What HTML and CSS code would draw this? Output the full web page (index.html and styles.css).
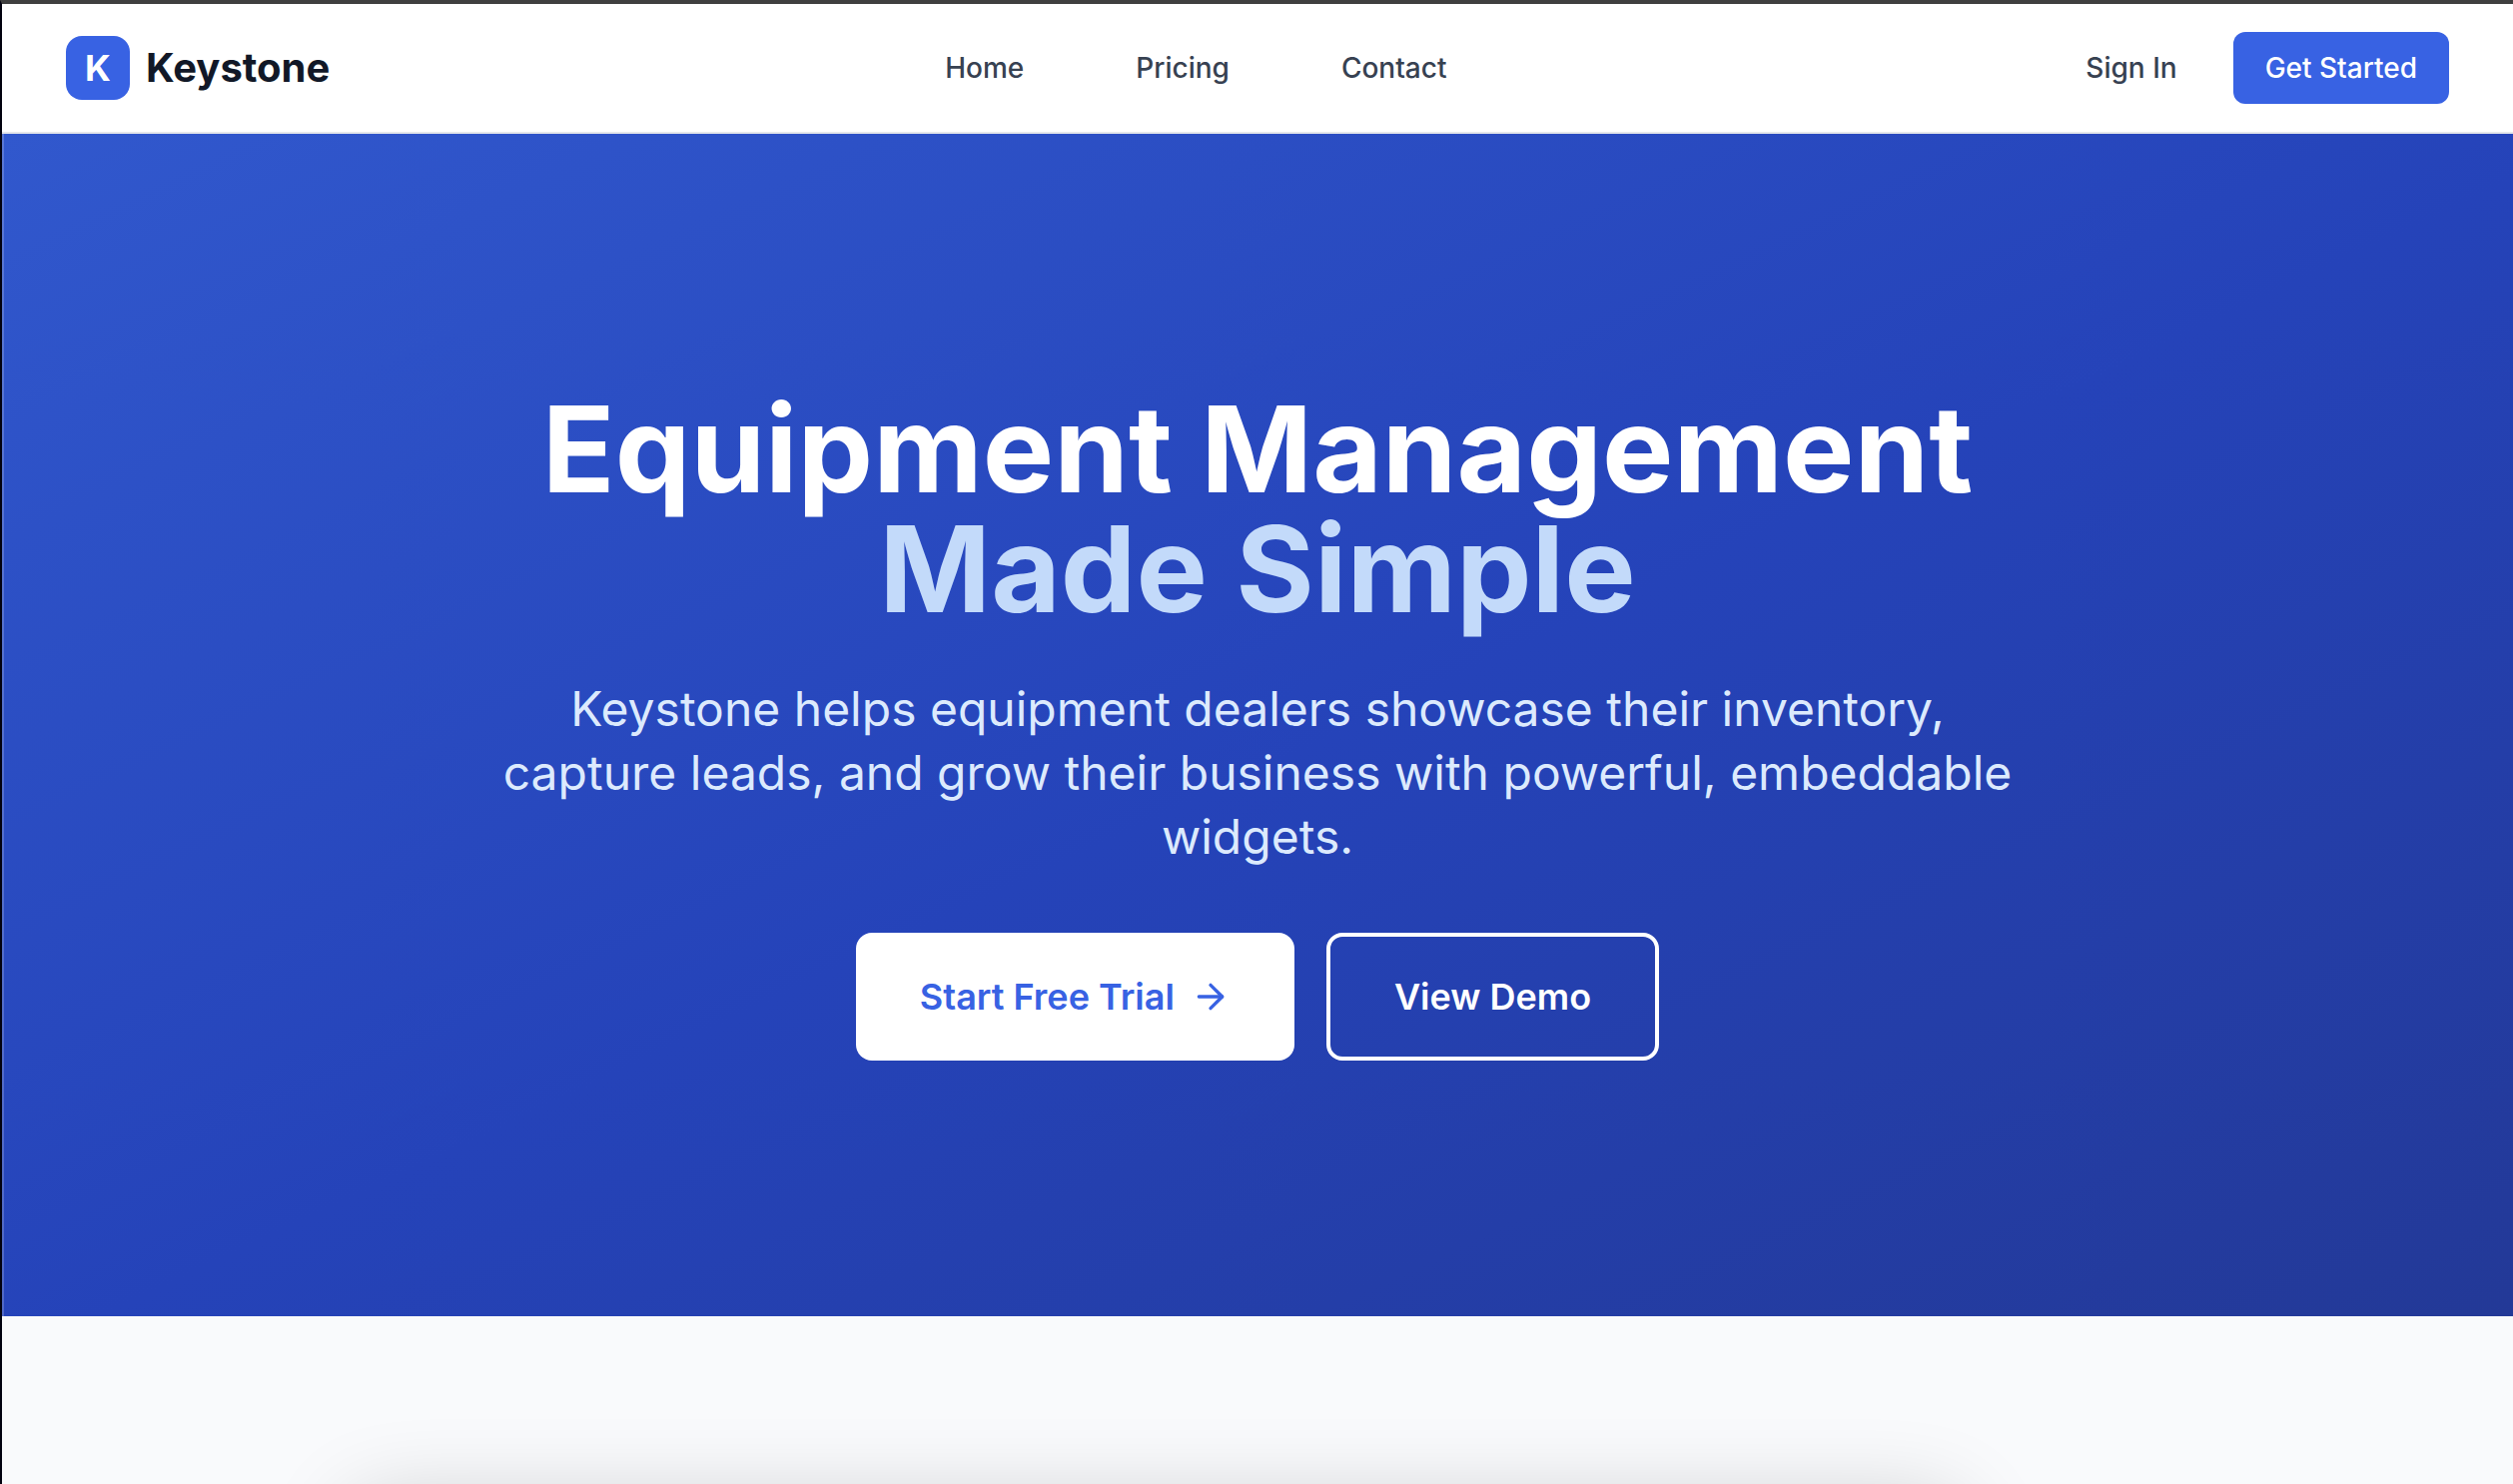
FILE: index.html
```html
<!DOCTYPE html>
<html lang="en">
<head>
    <meta charset="UTF-8">
    <meta name="viewport" content="width=device-width, initial-scale=1.0">
    <title>Keystone - Equipment Management Made Simple</title>
    <link rel="stylesheet" href="styles.css">
</head>
<body>
    <header class="header">
        <a href="#" class="logo">
            <span class="logo-mark">K</span>
            <span class="logo-name">Keystone</span>
        </a>
        <nav class="nav">
            <a href="#">Home</a>
            <a href="#pricing">Pricing</a>
            <a href="#contact">Contact</a>
        </nav>
        <div class="header-actions">
            <a href="#signin" class="sign-in">Sign In</a>
            <a href="#signup" class="btn-small">Get Started</a>
        </div>
    </header>

    <main>
        <section class="hero">
            <h1>Equipment Management <span class="accent">Made Simple</span></h1>
            <p class="hero-text">Keystone helps equipment dealers showcase their inventory, capture leads, and grow their business with powerful, embeddable widgets.</p>
            <div class="hero-actions">
                <a href="#signup" class="btn btn-light">
                    Start Free Trial
                    <svg class="arrow" viewBox="0 0 24 24" fill="none" stroke="currentColor" stroke-width="2" stroke-linecap="round" stroke-linejoin="round" aria-hidden="true">
                        <path d="M5 12h14"/>
                        <path d="m12 5 7 7-7 7"/>
                    </svg>
                </a>
                <a href="#demo" class="btn btn-outline">View Demo</a>
            </div>
        </section>

        <section class="preview">
            <div class="preview-card"></div>
        </section>
    </main>
</body>
</html>
```
FILE: styles.css
```css
* {
    box-sizing: border-box;
}

body {
    display: flex;
    flex-direction: column;
    height: 100vh;
    margin: 0;
    overflow: hidden;
    border-top: 4px solid #3f3f3f;
    border-left: 2px solid #02020f;
    background-color: #f9fafc;
    color: #111827;
    font-family: Inter, "Liberation Sans", sans-serif;
}

main {
    display: flex;
    flex: 1;
    flex-direction: column;
    min-height: 0;
}

a {
    color: inherit;
    text-decoration: none;
}

.header {
    display: flex;
    flex-shrink: 0;
    align-items: center;
    justify-content: space-between;
    padding: 28px 64px;
    background-color: white;
    border-bottom: 2px solid #e5e7eb;
}

.logo {
    display: flex;
    align-items: center;
    gap: 16px;
    font-weight: 700;
}

.logo-mark {
    display: flex;
    align-items: center;
    justify-content: center;
    width: 64px;
    height: 64px;
    border-radius: 16px;
    background-color: #3862e3;
    color: white;
    font-size: 36px;
}

.logo-name {
    font-size: 40px;
    line-height: 48px;
}

.nav {
    display: flex;
    gap: 112px;
    color: #374151;
    font-size: 28px;
    font-weight: 500;
}

.header-actions {
    display: flex;
    align-items: center;
    gap: 32px;
    font-size: 28px;
    font-weight: 500;
}

.sign-in {
    padding: 0 24px;
    color: #374151;
}

.btn-small {
    padding: 16px 32px;
    line-height: 40px;
    border-radius: 12px;
    background-color: #3862e3;
    color: white;
}

.hero {
    flex-shrink: 0;
    padding: 256px 64px;
    background: linear-gradient(to bottom right, #3158cd, #2543b9 52%, #233997);
    box-shadow: inset 2px 0 rgba(255, 255, 255, 0.2);
    color: white;
    text-align: center;
}

.hero h1 {
    margin: 0 0 48px;
    font-size: 120px;
    font-weight: 700;
    line-height: 1;
}

.accent {
    display: block;
    color: #c3dafa;
}

.hero-text {
    max-width: 1536px;
    margin: 0 auto 64px;
    color: #dceafd;
    font-size: 48px;
    line-height: 64px;
}

.hero-actions {
    display: flex;
    justify-content: center;
    gap: 32px;
}

.btn {
    display: flex;
    align-items: center;
    gap: 16px;
    padding: 32px 64px;
    border-radius: 16px;
    font-size: 36px;
    font-weight: 600;
    line-height: 64px;
}

.btn-light {
    background-color: white;
    color: #3862e3;
}

.btn-outline {
    padding: 28px 64px;
    border: 4px solid white;
}

.arrow {
    width: 40px;
    height: 40px;
}

.preview {
    flex: 1;
    min-height: 0;
    padding: 168px 552px 0 348px;
    overflow: hidden;
}

/* only the soft top edge of the card shows above the fold */
.preview-card {
    height: 400px;
    border-radius: 32px;
    box-shadow: 0 20px 88px rgba(0, 0, 0, 0.2);
}
```
